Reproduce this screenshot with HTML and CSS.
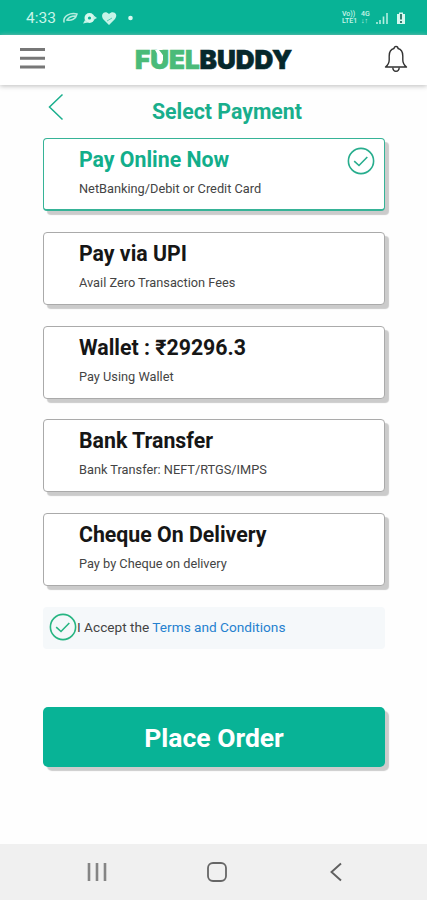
FILE: index.html
```
<!DOCTYPE html>
<html lang="en">
<head>
<meta charset="utf-8">
<title>Select Payment</title>
<link rel="stylesheet" href="styles.css">
</head>
<body>
<div class="screen">
  <div class="status">
    <span class="time">4:33</span>
    <svg class="notices" width="74" height="18" viewBox="0 0 74 18">
      <g fill="none" stroke="#b5eddf" stroke-width="1.500" stroke-linecap="round"><path d="M1 13C0 7 7 3.500 14 5C13 10 8 12 4 11C6 8 9 7 12 7"/></g>
      <circle cx="26.500" cy="9" r="5" fill="#d6f8ee"/><path d="M22 11L20 14.500L25 13.500ZM30 6L34 9L30 11Z" fill="#c0f2e5"/><circle cx="26.500" cy="9" r="1.600" fill="#08b396"/>
      <path d="M46 16L40 10C37 5 42 1 46 5C50 1 56 5 52 10Z" fill="#c6f4e8"/><path d="M44 12L49 9" stroke="#59cdb6"/>
      <circle cx="67.500" cy="9" r="2.300" fill="#d8f8f0"/>
    </svg>
    <div class="signals">
      <span class="tiny">Vo))<br>LTE1</span><span class="tiny net">4G<br>↓↑</span>
      <svg width="32" height="16" viewBox="0 0 32 16"><path d="M2 14V12M5 14V10M8.500 14V6.500M12 14V3" stroke="#b2eee0" stroke-width="1.600"/><path d="M22 4H24V2.500H28V4H30V14H22Z" fill="#d5f8ef"/><path d="M26 4V9.500M26 11V13" stroke="#246f61" stroke-width="1.800" fill="none"/></svg>
    </div>
  </div>
  <header class="bar">
    <svg class="menu" width="26" height="24" viewBox="0 0 26 24"><path d="M0 2.500H25M0 11.300H25M0 20H25" stroke="#777" stroke-width="3"/></svg>
    <div class="logo"><span class="fuel">FUEL</span><span>BUDDY</span><svg class="drop" width="12" height="14" viewBox="0 0 12 14"><path d="M1 0H4.500L9 5V10L7 13L4 10V5Z" fill="#fff"/><path d="M5 0H11V5H9Z" fill="#4abb79"/></svg></div>
    <svg class="bell" width="24" height="28" viewBox="0 0 24 28" fill="none" stroke="#333" stroke-width="1.400" stroke-linejoin="round"><path d="M10 3.500C10 .8 14 .8 14 3.500C17.500 4.300 18.800 7.500 18.800 11V15C18.800 18 20 20 22.500 22H1.500C4 20 5.200 18 5.200 15V11C5.200 7.500 6.500 4.300 10 3.500Z"/><path d="M8.800 22.500C9 27.500 15 27.500 15.200 22.500"/></svg>
  </header>
  <main>
    <div class="heading">
      <svg class="back" width="16" height="28" viewBox="0 0 16 28"><path d="M14.500 1.500L1.500 14L14.500 26.500" fill="none" stroke="#1aaf8d" stroke-width="1.500"/></svg>
      <h1>Select Payment</h1>
    </div>
    <div class="options">
      <section class="card selected"><h2>Pay Online Now</h2><p>NetBanking/Debit or Credit Card</p>
        <svg class="tick" width="28" height="28" viewBox="0 0 28 28" fill="none" stroke="#27ad8d" stroke-width="1.600"><circle cx="14" cy="14" r="12.600"/><path d="M7.200 14.200L12 18.500L20.300 10"/></svg></section>
      <section class="card"><h2>Pay via UPI</h2><p>Avail Zero Transaction Fees</p></section>
      <section class="card"><h2>Wallet : ₹29296.3</h2><p>Pay Using Wallet</p></section>
      <section class="card"><h2>Bank Transfer</h2><p>Bank Transfer: NEFT/RTGS/IMPS</p></section>
      <section class="card"><h2>Cheque On Delivery</h2><p>Pay by Cheque on delivery</p></section>
    </div>
    <div class="accept">
      <svg width="28" height="28" viewBox="0 0 28 28" fill="none" stroke="#27b582" stroke-width="1.600"><circle cx="14" cy="14" r="12.600"/><path d="M7.200 14.200L12 18.500L20.300 10"/></svg>
      <span>I Accept the <a>Terms and Conditions</a></span>
    </div>
    <button class="order">Place Order</button>
  </main>
  <nav>
    <svg width="20" height="20" viewBox="0 0 20 20"><path d="M2 1V19M10 1V19M18 1V19" stroke="#858585" stroke-width="2.600"/></svg>
    <svg width="20" height="20" viewBox="0 0 20 20"><rect x="1" y="1" width="18" height="18" rx="5" fill="none" stroke="#666" stroke-width="1.800"/></svg>
    <svg width="20" height="20" viewBox="0 0 20 20"><path d="M15 1.500L5.500 10L15 18.500" fill="none" stroke="#606060" stroke-width="1.900"/></svg>
  </nav>
</div>
</body>
</html>
```
FILE: styles.css
```
* { box-sizing: border-box; }
body { margin: 0; font-family: Roboto, sans-serif; color: #161616; background: #fefefe; }
h1, h2, p { margin: 0; }
svg { display: block; flex: none; }
.screen { width: 427px; height: 900px; display: flex; flex-direction: column; overflow: hidden; }
.status { height: 35px; background: #08b396; display: flex; align-items: center; padding: 1px 20px 0 26px; color: #c9f5e9; }
.time { font-size: 15.500px; width: 37px; }
.signals { margin-left: auto; display: flex; align-items: center; }
.tiny { font-size: 7px; line-height: 7px; font-weight: 500; width: 19px; }
.net { width: 14px; }
.bar { height: 50px; background: #fff; display: flex; align-items: center; justify-content: space-between; padding: 0 19px 2px 20px; box-shadow: 0 1px 5px #bbb; }
.logo { position: relative; display: flex; font: 900 26px/30px Inter, sans-serif; color: #06282c; width: 156px; margin: 1px 4px 0 0; -webkit-text-stroke: 0.6px currentColor; }
.fuel { color: #4abb79; }
.drop { position: absolute; left: 19px; top: 5px; }
main { padding: 0 42px 0 43px; flex: 1; }
.heading { display: flex; align-items: center; height: 53px; padding: 0 0 7px 5px; }
.back { position: relative; top: -1px; }
h1 { font-size: 21.300px; line-height: 26px; font-weight: 700; color: #19ae8c; margin: 8px 0 0 88px; white-space: nowrap; }
.options { display: flex; flex-direction: column; gap: 20.800px; }
.card { position: relative; height: 73px; background: #fff; border: 1px solid #aaa; border-radius: 4px; padding: 8px 0 0 35px; box-shadow: 4px 4px 1px #cbcbcb; }
.card.selected { border: 1px solid #36b397; border-bottom-width: 2px; }
h2 { font-size: 21.300px; line-height: 26px; font-weight: 700; white-space: nowrap; }
.selected h2 { color: #12ae8b; }
.card p { font-size: 12.780px; line-height: 16px; margin-top: 8px; color: #444; }
.tick { position: absolute; right: 9px; top: 8px; }
.accept { height: 42px; margin-top: 21px; background: #f5f8fa; border-radius: 4px; display: flex; align-items: center; padding: 0 0 3px 6px; font-size: 13.650px; color: #444; }
.accept a { color: #2581cf; }
.order { display: block; width: 342px; height: 60px; margin-top: 58px; border: 0; border-radius: 5px; background: #08b396; color: #fff; font: 700 26.500px Roboto, sans-serif; box-shadow: 4px 4px 1px #ccc; padding: 1px 0 0; }
nav { height: 56px; background: #f0f0f0; display: flex; justify-content: space-between; align-items: center; padding: 0 81px 0 87px; }
```
